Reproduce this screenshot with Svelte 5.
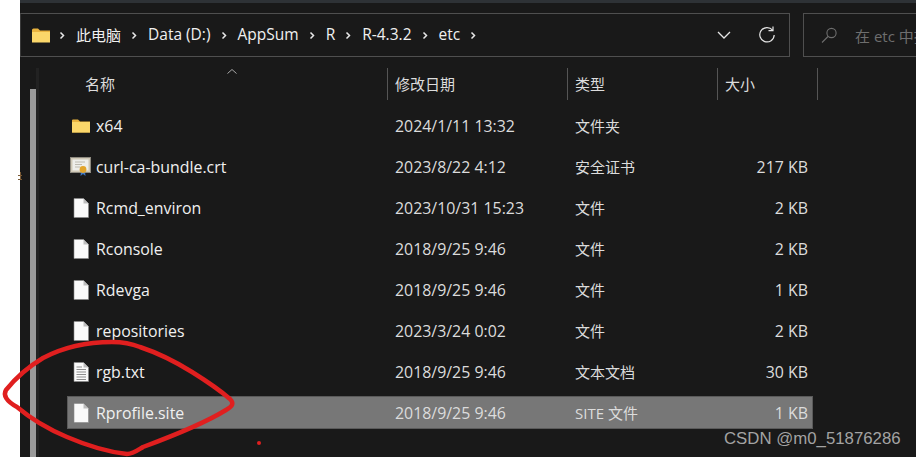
<script>
  const crumbs = [
    { text: '此电脑', cjk: true },
    { text: 'Data (D:)' },
    { text: 'AppSum' },
    { text: 'R' },
    { text: 'R-4.3.2' },
    { text: 'etc' }
  ];
  const columns = [
    { label: '名称', width: 340 },
    { label: '修改日期', width: 180 },
    { label: '类型', width: 150 },
    { label: '大小', width: 100 }
  ];
  const files = [
    { name: 'x64', date: '2024/1/11 13:32', type: '文件夹', size: '', icon: 'folder' },
    { name: 'curl-ca-bundle.crt', date: '2023/8/22 4:12', type: '安全证书', size: '217 KB', icon: 'cert' },
    { name: 'Rcmd_environ', date: '2023/10/31 15:23', type: '文件', size: '2 KB', icon: 'file' },
    { name: 'Rconsole', date: '2018/9/25 9:46', type: '文件', size: '2 KB', icon: 'file' },
    { name: 'Rdevga', date: '2018/9/25 9:46', type: '文件', size: '1 KB', icon: 'file' },
    { name: 'repositories', date: '2023/3/24 0:02', type: '文件', size: '2 KB', icon: 'file' },
    { name: 'rgb.txt', date: '2018/9/25 9:46', type: '文本文档', size: '30 KB', icon: 'text' },
    { name: 'Rprofile.site', date: '2018/9/25 9:46', type: 'SITE 文件', size: '1 KB', icon: 'file', selected: true }
  ];
</script>

<div class="page">
  <div class="margin"></div>
  <div class="explorer">
    <div class="toolbar">
      <div class="address">
        <svg class="addr-folder" width="18" height="15" viewBox="0 0 18 15">
          <path d="M0 2 Q0 0.5 1.5 0.5 H6 L8 2.5 H18 V14 H0 Z" fill="#e9b33f" />
          <rect x="0" y="4" width="18" height="10.5" fill="#fbd76a" />
        </svg>
        {#each crumbs as crumb}
          <svg class="chev" width="6" height="9" viewBox="0 0 6 9"><path d="M1.5 1.5 L4.5 4.5 L1.5 7.5" fill="none" stroke="#e8e8e8" stroke-width="1.5" /></svg>
          <span class="crumb" class:cjk={crumb.cjk}>{crumb.text}</span>
        {/each}
        <svg class="chev" width="6" height="9" viewBox="0 0 6 9"><path d="M1.5 1.5 L4.5 4.5 L1.5 7.5" fill="none" stroke="#e8e8e8" stroke-width="1.5" /></svg>
        <div class="spacer"></div>
        <svg class="drop" width="14" height="8" viewBox="0 0 14 8"><path d="M1 1 L7 7 L13 1" fill="none" stroke="#e6e6e6" stroke-width="1.3" /></svg>
        <svg class="refresh" width="18" height="18" viewBox="0 0 18 18">
          <path d="M14.6 4.2 A7.2 7.2 0 1 0 16.2 9" fill="none" stroke="#e6e6e6" stroke-width="1.2" />
          <path d="M10.5 4.6 H15 V0.6" fill="none" stroke="#e6e6e6" stroke-width="1.2" />
        </svg>
      </div>
      <div class="search">
        <svg class="lens" width="17" height="17" viewBox="0 0 17 17">
          <circle cx="10.5" cy="6" r="4.6" fill="none" stroke="#6e6e6e" stroke-width="1.1" />
          <path d="M7 9.5 L1 15.5" stroke="#6e6e6e" stroke-width="1.1" />
        </svg>
        <span>在 etc 中搜索</span>
      </div>
    </div>

    <div class="body">
      <div class="track"><div class="thumb"></div></div>
      <div class="list">
        <div class="head">
          {#each columns as col}
            <div class="col" style="width: {col.width}px">{col.label}</div>
          {/each}
          <svg class="sort" width="10" height="5" viewBox="0 0 10 5"><path d="M0.5 4.5 L5 0.5 L9.5 4.5" fill="none" stroke="#a8a8a8" /></svg>
        </div>
        {#each files as file}
          <div class="row" class:selected={file.selected}>
            <div class="name">
              <span class="icon">
                {#if file.icon === 'folder'}
                  <svg width="18" height="14" viewBox="0 0 18 14">
                    <path d="M0 1.5 Q0 0.5 1 0.5 H6 L8 2.5 H18 V13.5 H0 Z" fill="#e9b33f" />
                    <rect x="0" y="3" width="18" height="10.5" fill="#fbd76a" />
                  </svg>
                {:else if file.icon === 'cert'}
                  <svg width="21" height="19" viewBox="0 0 21 19">
                    <rect x="0.5" y="0.5" width="20" height="15" fill="#cfc8b6" stroke="#8e8a80" />
                    <rect x="2.5" y="2.5" width="16" height="11" fill="#eeeeea" />
                    <path d="M5 5 H15 M5 7.5 H12 M5 10 H10" stroke="#bdbab0" />
                    <path d="M11 14 L10.5 19 L13 17 L15.5 19 L15 14" fill="#3f78c4" />
                    <circle cx="13" cy="12.5" r="3.4" fill="#e2a52c" />
                  </svg>
                {:else}
                  <svg width="16" height="20" viewBox="0 0 16 20">
                    <path d="M1 0.5 H10.5 L15.5 5.5 V19.5 H1 Z" fill="#fafafa" stroke="#8a8a8a" stroke-width="0.6" />
                    <path d="M10.5 0.5 V5.5 H15.5 Z" fill="#bdbdbd" />
                    {#if file.icon === 'text'}
                      <path d="M3.5 5 H9 M3.5 7.5 H13 M3.5 10 H13 M3.5 12.5 H13 M3.5 15 H13 M3.5 17.5 H13" stroke="#8f8f8f" />
                    {/if}
                  </svg>
                {/if}
              </span>
              <span class="label">{file.name}</span>
            </div>
            <div class="date">{file.date}</div>
            <div class="type">{file.type}</div>
            <div class="size">{file.size}</div>
          </div>
        {/each}
      </div>
    </div>
  </div>

  <svg class="scribble" width="916" height="457" viewBox="0 0 916 457">
    <path d="M18 175.5 H22 M18 179.5 H22 M20.5 172 V180" stroke="#7a5a35" />
    <path d="M112 342 C85 342 60 349 43 358 C28 367 14 380 6 390 C3 395 6 401 17 407 C30 418 48 429 67 437 C88 446 108 452 127 454 C133 454 138 450 143 447 C170 437 205 423 226 410 C233 406 234 403 230 399 C222 392 208 382 192 372 C176 362 158 353 140 347 C130 343 122 342 112 342 Z" fill="none" stroke="#e01f1f" stroke-width="4.5" />
    <circle cx="259" cy="443" r="2" fill="#e01f1f" />
  </svg>
  <div class="watermark">CSDN @m0_51876286</div>
</div>

<style>
  :global(body) {
    background: #fff;
    overflow: hidden;
  }

  .page {
    position: relative;
    display: flex;
    width: 916px;
    height: 457px;
    overflow: hidden;
    font-family: "Open Sans", "Noto Sans CJK SC", sans-serif;
    font-size: 15.9px;
    color: #f0f0f0;
  }

  .margin {
    width: 20px;
    background: #fff;
  }

  .explorer {
    flex: 1;
    display: flex;
    flex-direction: column;
    background: #191919;
    border-top: 3px solid #2e3236;
    min-width: 0;
  }

  .toolbar {
    display: flex;
    gap: 13px;
    height: 44px;
    margin-top: 10px;
  }

  .address {
    width: 770px;
    box-sizing: border-box;
    display: flex;
    align-items: center;
    padding: 0 13px 0 11px;
    border: 1px solid #4f4f4f;
    border-left-color: #3a3a3a;
  }

  .addr-folder {
    margin-right: 9px;
    flex: none;
  }

  .chev {
    margin-right: 11px;
    flex: none;
  }

  .crumb {
    margin-right: 10px;
    padding-bottom: 2px;
    font-size: 15.5px;
    white-space: nowrap;
  }

  .crumb.cjk {
    font-size: 15px;
  }

  .spacer {
    flex: 1;
  }

  .drop {
    margin-right: 27px;
    flex: none;
  }

  .refresh {
    flex: none;
  }

  .search {
    flex: 1;
    display: flex;
    align-items: center;
    gap: 17px;
    padding-left: 17px;
    border: 1px solid #4f4f4f;
    border-right: 0;
    color: #6e6e6e;
    font-size: 15px;
    white-space: nowrap;
    overflow: hidden;
  }

  .lens {
    flex: none;
  }

  .body {
    flex: 1;
    display: flex;
    margin-top: 11px;
    min-height: 0;
  }

  .track {
    width: 16px;
    padding-left: 10px;
    padding-top: 21px;
    box-sizing: border-box;
  }

  .thumb {
    width: 6px;
    height: 100%;
    background: #9a9a9a;
  }

  .list {
    flex: 1;
    padding-left: 9px;
    border-left: 3px solid #222;
  }

  .head {
    position: relative;
    display: flex;
    height: 32px;
    font-size: 15px;
  }

  .col {
    box-sizing: border-box;
    padding-left: 37px;
    line-height: 33px;
    border-right: 1px solid #555;
    color: #dcdcdc;
  }

  .col:nth-child(n + 2) {
    padding-left: 7px;
  }

  .sort {
    position: absolute;
    left: 179px;
    top: 1px;
  }

  .row {
    box-sizing: border-box;
    display: flex;
    align-items: center;
    width: 746px;
    height: 33px;
    margin: 4px 0 8px 19px;
  }

  .head + .row {
    margin-top: 9px;
  }

  .row.selected {
    background: #777;
    box-shadow: inset 0 0 0 1px #5a5a5a;
  }

  .name {
    width: 328px;
    display: flex;
    align-items: center;
    flex: none;
  }

  .icon {
    width: 21px;
    margin-left: 3px;
    margin-right: 5px;
    display: flex;
    justify-content: center;
  }

  .date {
    width: 180px;
    flex: none;
    color: #dcdcdc;
  }

  .type {
    width: 130px;
    flex: none;
    font-size: 15px;
    color: #dcdcdc;
  }

  .size {
    flex: 1;
    text-align: right;
    padding-right: 5px;
    color: #dcdcdc;
  }

  .scribble {
    position: absolute;
    inset: 0;
    pointer-events: none;
  }

  .watermark {
    position: absolute;
    left: 724px;
    top: 429px;
    font-family: "Liberation Sans", sans-serif;
    font-size: 16.8px;
    color: #a3a3a3;
  }
</style>
